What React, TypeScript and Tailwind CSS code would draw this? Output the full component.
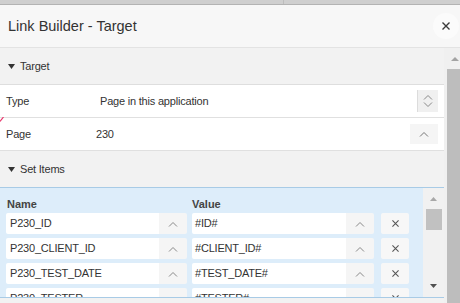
import React from "react";

const ChevUp = ({ c = "#777" }: { c?: string }) => (
  <svg width="10" height="6" viewBox="0 0 10 6" fill="none">
    <path d="M1 5.5 L5 1.5 L9 5.5" stroke={c} strokeWidth="1" />
  </svg>
);

const XIcon = ({ s = 8, c = "#444", w = 1.4 }: { s?: number; c?: string; w?: number }) => (
  <svg width={s} height={s} viewBox="0 0 8 8" fill="none">
    <path d="M0.5 0.5 L7.5 7.5 M7.5 0.5 L0.5 7.5" stroke={c} strokeWidth={w} />
  </svg>
);

const Tri = () => (
  <svg width="7" height="5" viewBox="0 0 7 5">
    <path d="M0 0 L7 0 L3.5 5 Z" fill="#333" />
  </svg>
);

const rows = [
  { n: "P230_ID", v: "#ID#" },
  { n: "P230_CLIENT_ID", v: "#CLIENT_ID#" },
  { n: "P230_TEST_DATE", v: "#TEST_DATE#" },
  { n: "P230_TESTER", v: "#TESTER#" },
];

export default function App() {
  return (
    <div className="w-[460px] h-[303px] overflow-hidden bg-[#f7f7f7] flex flex-col text-[#333] font-['Liberation_Sans',Arial,sans-serif]">
      {/* top strip */}
      <div className="h-[5px] shrink-0 bg-[#cfcfcf] border-b border-[#b3b3b3] flex">
        <div className="w-[284px] border-r border-[#bdbdbd]" />
      </div>
      {/* header */}
      <div className="h-[43px] shrink-0 flex items-center justify-between pl-[8px] pr-[1px] border-b border-[#e3e3e3] bg-[#f7f7f7]">
        <span className="text-[14.5px] leading-none pt-[1px]">Link Builder - Target</span>
        <div className="w-[26px] h-[26px] rounded-full bg-[#fbfbfb] flex items-center justify-center">
          <XIcon s={8} c="#3a3a3a" w={1.4} />
        </div>
      </div>
      {/* body */}
      <div className="flex flex-1 min-h-0">
        <div className="w-[444px] flex flex-col text-[11px] leading-[13px] tracking-[-0.2px] relative">
          {/* Target section header */}
          <div className="h-[37px] shrink-0 bg-[#f2f2f2] border-b border-[#dedede] flex items-center pl-[8px] gap-[5px]">
            <Tri />
            <span>Target</span>
          </div>
          {/* Type row */}
          <div className="h-[33px] shrink-0 bg-white border-b border-[#e0e0e0] flex items-center pl-[6px] pr-[6px]">
            <span className="w-[94px]">Type</span>
            <span className="flex-1">Page in this application</span>
            <div className="w-[21px] h-[22px] bg-[#f0f0f0] border-l border-[#dcdcdc] flex flex-col items-center justify-center gap-[2px]">
              <ChevUp c="#888" />
              <div className="rotate-180 flex">
                <ChevUp c="#888" />
              </div>
            </div>
          </div>
          {/* Page row */}
          <div className="h-[33px] shrink-0 bg-white border-b border-[#e0e0e0] flex items-center pl-[6px] pr-[6px] relative">
            <svg className="absolute left-0 top-[-1px]" width="4" height="5" viewBox="0 0 4 5">
              <path d="M0 4.5 L3.5 0" stroke="#e8336a" strokeWidth="1.2" />
            </svg>
            <span className="w-[90px]">Page</span>
            <span className="flex-1">230</span>
            <div className="w-[28px] h-[20px] bg-[#f5f5f5] flex items-center justify-center">
              <ChevUp />
            </div>
          </div>
          {/* Set Items header */}
          <div className="h-[36px] shrink-0 bg-[#f2f2f2] flex items-center pl-[8px] gap-[5px]">
            <Tri />
            <span>Set Items</span>
          </div>
          {/* Set items table */}
          <div className="h-[111px] shrink-0 border-y border-[#a8cbe6] bg-[#ddedfa] flex">
            <div className="flex-1 overflow-hidden pl-[6px]">
              <div className="h-[25px] flex pt-[10px] font-bold text-[#444] tracking-normal">
                <span className="w-[186px] pl-[1px]">Name</span>
                <span>Value</span>
              </div>
              <div className="flex flex-col gap-[4px]">
                {rows.map((r) => (
                  <div key={r.n} className="h-[21px] shrink-0 flex">
                    <div className="w-[153px] bg-white rounded-l-[2px] pl-[4px] flex items-center">{r.n}</div>
                    <div className="w-[28px] bg-[#f5f5f5] rounded-r-[2px] flex items-center justify-center">
                      <ChevUp c="#888" />
                    </div>
                    <div className="w-[154px] ml-[5px] bg-white rounded-l-[2px] pl-[3px] flex items-center">{r.v}</div>
                    <div className="w-[28px] bg-[#f5f5f5] rounded-r-[2px] flex items-center justify-center">
                      <ChevUp c="#888" />
                    </div>
                    <div className="w-[28px] ml-[7px] bg-[#f7f7f7] rounded-[2px] flex items-center justify-center">
                      <XIcon s={7} c="#555" w={1.2} />
                    </div>
                  </div>
                ))}
              </div>
            </div>
            {/* inner scrollbar */}
            <div className="w-[21px] bg-[#f1f1f1] flex flex-col items-center">
              <div className="h-[21px] flex items-center justify-center">
                <svg width="7" height="4" viewBox="0 0 7 4"><path d="M0 4 L3.5 0 L7 4 Z" fill="#a8a8a8" /></svg>
              </div>
              <div className="w-[16px] h-[21px] bg-[#c1c1c1]" />
              <div className="flex-1" />
              <div className="h-[22px] flex items-center justify-center">
                <svg width="7" height="4" viewBox="0 0 7 4"><path d="M0 0 L7 0 L3.5 4 Z" fill="#505050" /></svg>
              </div>
            </div>
          </div>
          <div className="flex-1 bg-[#f2f2f2]" />
        </div>
        {/* outer scrollbar */}
        <div className="w-[16px] bg-[#f0f0f0] flex flex-col">
          <div className="h-[21px] flex items-center justify-center pl-[6px]">
            <svg width="8" height="4" viewBox="0 0 8 4"><path d="M0 4 L4 0 L8 4 Z" fill="#a3a3a3" /></svg>
          </div>
          <div className="flex-1 ml-[3px] bg-[#bdbdbd]" />
        </div>
      </div>
    </div>
  );
}
